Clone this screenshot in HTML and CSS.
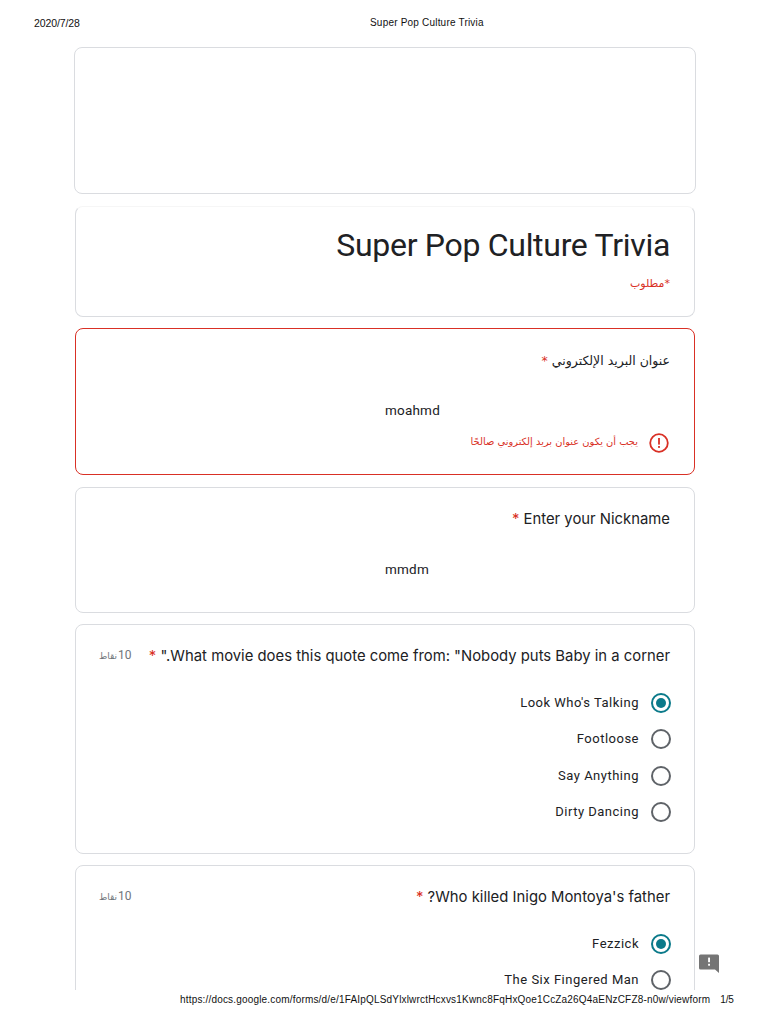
FILE: index.html
```html
<!DOCTYPE html>
<html lang="ar">
<head>
<meta charset="utf-8">
<title>Super Pop Culture Trivia</title>
<link rel="stylesheet" href="styles.css">
</head>
<body>
<div class="page">
  <header class="print-head" dir="ltr">
    <span class="print-date">2020/7/28</span>
    <span class="print-title">Super Pop Culture Trivia</span>
  </header>
  <main class="form" dir="rtl">
    <section class="card banner"></section>
    <section class="card intro">
      <h1 class="form-title">Super Pop Culture Trivia</h1>
      <p class="required-note">*مطلوب</p>
    </section>
    <section class="card error-card">
      <div class="q-label arabic">عنوان البريد الإلكتروني <span class="star">*</span></div>
      <div class="answer" dir="ltr">moahmd</div>
      <div class="error-row">
        <svg class="error-icon" viewBox="0 0 20 20" aria-hidden="true"><circle cx="10" cy="10" r="8.8" fill="none" stroke="#d93025" stroke-width="1.8"/><rect x="9.1" y="5" width="1.8" height="6.6" fill="#d93025"/><rect x="9.1" y="13" width="1.8" height="1.9" fill="#d93025"/></svg>
        <span class="error-text">يجب أن يكون عنوان بريد إلكتروني صالحًا</span>
      </div>
    </section>
    <section class="card nick-card">
      <div class="q-label">Enter your Nickname <span class="star">*</span></div>
      <div class="answer nick-answer" dir="ltr">mmdm</div>
    </section>
    <section class="card q-card">
      <div class="q-head">
        <div class="q-label">What movie does this quote come from: "Nobody puts Baby in a corner." <span class="star">*</span></div>
        <div class="points">10 <span class="points-unit">نقاط</span></div>
      </div>
      <div class="options">
        <div class="option"><span class="radio on"></span><span>Look Who's Talking</span></div>
        <div class="option"><span class="radio"></span><span>Footloose</span></div>
        <div class="option"><span class="radio"></span><span>Say Anything</span></div>
        <div class="option"><span class="radio"></span><span>Dirty Dancing</span></div>
      </div>
    </section>
    <section class="card q-card last">
      <div class="q-head">
        <div class="q-label">Who killed Inigo Montoya's father? <span class="star">*</span></div>
        <div class="points">10 <span class="points-unit">نقاط</span></div>
      </div>
      <div class="options">
        <div class="option"><span class="radio on"></span><span>Fezzick</span></div>
        <div class="option"><span class="radio"></span><span>The Six Fingered Man</span></div>
      </div>
    </section>
    <svg class="feedback" viewBox="0 0 20 20" aria-hidden="true"><path d="M1.5 0.5H18.5Q20 0.5 20 2V19L16 15.5H1.5Q0 15.5 0 14V2Q0 0.5 1.5 0.5Z" fill="#757575"/><rect x="9.1" y="3.6" width="1.9" height="4.6" fill="#fff"/><rect x="9.1" y="9.8" width="1.9" height="1.9" fill="#fff"/></svg>
  </main>
  <footer class="print-foot" dir="ltr">
    <span class="print-url">https://docs.google.com/forms/d/e/1FAIpQLSdYlxlwrctHcxvs1Kwnc8FqHxQoe1CcZa26Q4aENzCFZ8-n0w/viewform</span>
    <span class="print-page">1/5</span>
  </footer>
</div>
</body>
</html>
```
FILE: styles.css
```css
* { box-sizing: border-box; }
html, body { margin: 0; padding: 0; background: #fff; }
body { font-family: Roboto, "DejaVu Sans", sans-serif; color: #202124; }
.page { width: 768px; height: 1024px; overflow: hidden; display: flex; flex-direction: column; }

.print-head { height: 47px; flex: none; display: flex; align-items: flex-start; gap: 290px; padding: 16px 0 0 34px; font: 10.5px/14px "Liberation Sans", sans-serif; color: #111; }
.print-date { width: 46px; letter-spacing: -0.12px; white-space: nowrap; }
.print-title { font-size: 10px; letter-spacing: 0.2px; white-space: nowrap; }

.form { position: relative; flex: none; height: 943px; overflow: hidden; display: flex; flex-direction: column; gap: 12px; padding: 0 73px 0 75px; }
.card { flex: none; background: #fff; border: 1px solid #dadce0; border-radius: 8px; padding: 0 24px; }
.banner { height: 147px; margin-left: -1px; margin-right: -1px; }
.intro { height: 111px; margin-top: 0; margin-bottom: -1px; border-top-color: #f6f6f6; padding-top: 15px; }
.form-title { margin: 0; font: 400 32px/46px Roboto, sans-serif; letter-spacing: -0.3px; color: #202124; }
.required-note { margin: 7px 0 0; font: 11px/18px "DejaVu Sans", sans-serif; color: #d93025; }

.error-card { height: 147px; border-color: #d93025; padding-top: 21px; }
.q-label { flex: 1; font: 400 14.85px/22px Inter, sans-serif; color: #202124; white-space: nowrap; }
.q-label.arabic { font: 12.5px/22px "DejaVu Sans", sans-serif; }
.star { color: #d93025; }
.answer { width: 286px; margin-top: 28px; padding-left: 1px; font: 400 13.5px/20px Roboto, sans-serif; letter-spacing: 0.2px; color: #202124; }
.nick-answer { margin-top: 29px; }
.error-row { display: flex; align-items: center; gap: 11px; margin-top: 13px; }
.error-icon { width: 20px; height: 20px; flex: none; margin-right: 1px; }
.error-text { font: 9.9px/14px "DejaVu Sans", sans-serif; color: #d93025; white-space: nowrap; position: relative; top: -1px; }

.nick-card { height: 126px; padding-top: 20px; }

.q-card { height: 230px; margin-top: -1px; padding-top: 19px; }
.q-card.last { height: 200px; margin-top: -1px; }
.q-head { display: flex; justify-content: space-between; align-items: center; gap: 8px; }
.points { flex: none; font: 400 12px/22px Roboto, "DejaVu Sans", sans-serif; color: #70757a; white-space: nowrap; word-spacing: -2px; margin-left: -1px; }
.points-unit { font-size: 9px; }
.options { display: flex; flex-direction: column; gap: 16.35px; margin-top: 26px; margin-right: -1px; }
.option { display: flex; align-items: center; gap: 12px; height: 20px; font: 400 13px/20px Roboto, sans-serif; letter-spacing: 0.5px; color: #202124; }
.radio { width: 20px; height: 20px; flex: none; border: 2px solid #5f6368; border-radius: 50%; position: relative; }
.radio.on { border-color: #0b7a8a; }
.radio.on::after { content: ""; position: absolute; inset: 3px; border-radius: 50%; background: #0b7a8a; }

.feedback { position: absolute; left: 699px; top: 907px; width: 20px; height: 20px; }

.print-foot { flex: none; display: flex; gap: 10px; padding: 3px 0 0 180px; font: 10px/14px "Liberation Sans", sans-serif; color: #111; }
.print-url { letter-spacing: 0.18px; white-space: nowrap; }
.print-page { white-space: nowrap; letter-spacing: -0.1px; }
```
